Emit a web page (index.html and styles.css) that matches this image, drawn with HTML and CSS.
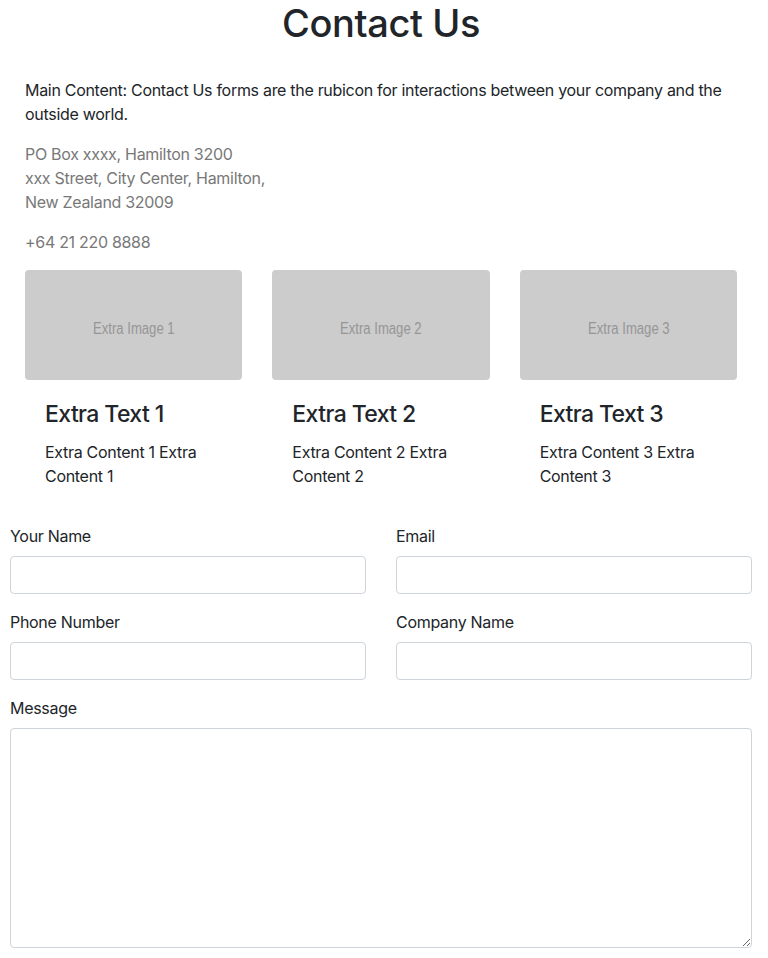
FILE: index.html
```html
<!DOCTYPE html>
<html lang="en">
<head>
<meta charset="utf-8">
<title>Contact Us</title>
<link rel="stylesheet" href="styles.css">
</head>
<body>
<div class="page">
  <h1 class="title">Contact Us</h1>
  <section class="intro">
    <p class="lead">Main Content: Contact Us forms are the rubicon for interactions between your company and the outside world.</p>
    <p class="muted">PO Box xxxx, Hamilton 3200<br>xxx Street, City Center, Hamilton,<br>New Zealand 32009</p>
    <p class="muted">+64 21 220 8888</p>
  </section>
  <section class="cards">
    <div class="card">
      <div class="ph"><span>Extra Image 1</span></div>
      <div class="card-body">
        <h4 class="card-title">Extra Text 1</h4>
        <p class="card-text">Extra Content 1 Extra Content 1</p>
      </div>
    </div>
    <div class="card">
      <div class="ph"><span>Extra Image 2</span></div>
      <div class="card-body">
        <h4 class="card-title">Extra Text 2</h4>
        <p class="card-text">Extra Content 2 Extra Content 2</p>
      </div>
    </div>
    <div class="card">
      <div class="ph"><span>Extra Image 3</span></div>
      <div class="card-body">
        <h4 class="card-title">Extra Text 3</h4>
        <p class="card-text">Extra Content 3 Extra Content 3</p>
      </div>
    </div>
  </section>
  <form class="form">
    <div class="field">
      <label for="name">Your Name</label>
      <input id="name" type="text">
    </div>
    <div class="field">
      <label for="email">Email</label>
      <input id="email" type="email">
    </div>
    <div class="field">
      <label for="phone">Phone Number</label>
      <input id="phone" type="text">
    </div>
    <div class="field">
      <label for="company">Company Name</label>
      <input id="company" type="text">
    </div>
    <div class="field full">
      <label for="msg">Message</label>
      <textarea id="msg"></textarea>
    </div>
  </form>
</div>
</body>
</html>
```
FILE: styles.css
```css
* { box-sizing: border-box; }
html, body { margin: 0; padding: 0; background: #fff; }
body {
  font-family: Inter, "Noto Sans", "Liberation Sans", sans-serif;
  font-size: 16px;
  line-height: 24px;
  letter-spacing: -0.3px;
  color: #212529;
}
.page {
  width: 742px;
  margin-left: 10px;
}
.title {
  margin: 0;
  font-size: 38px;
  line-height: 46px;
  font-weight: 500;
  letter-spacing: -0.4px;
  text-align: center;
}
.intro {
  padding: 32px 15px 0;
}
.intro p { margin: 0 0 16px; }
.lead { color: #212529; }
.muted { color: #787878; }
.cards {
  display: grid;
  grid-template-columns: repeat(3, 1fr);
}
.card { padding: 0 15px; }
.ph {
  height: 110px;
  padding-top: 7px;
  background: #cccccc;
  border-radius: 4px;
  display: flex;
  align-items: center;
  justify-content: center;
  color: #969696;
  font-family: "Liberation Sans", Arial, sans-serif;
  font-size: 16px;
  letter-spacing: 0;
}
.ph span { display: inline-block; transform: scaleX(0.82); }
.card-body { padding: 20px; }
.card-title {
  margin: 0 0 11px;
  font-size: 23px;
  line-height: 29px;
  font-weight: 500;
  letter-spacing: -0.6px;
}
.card-text { margin: 0; }
.form {
  margin-top: 16px;
  display: grid;
  grid-template-columns: 1fr 1fr;
  column-gap: 30px;
  row-gap: 16px;
}
.field { display: flex; flex-direction: column; }
.field.full { grid-column: 1 / -1; }
.field label { margin-bottom: 8px; }
.field input, .field textarea {
  height: 38px;
  border: 1px solid #ced4da;
  border-radius: 4px;
  font: inherit;
  padding: 6px 12px;
  background: #fff;
}
.field textarea { height: 220px; resize: vertical; }
```
